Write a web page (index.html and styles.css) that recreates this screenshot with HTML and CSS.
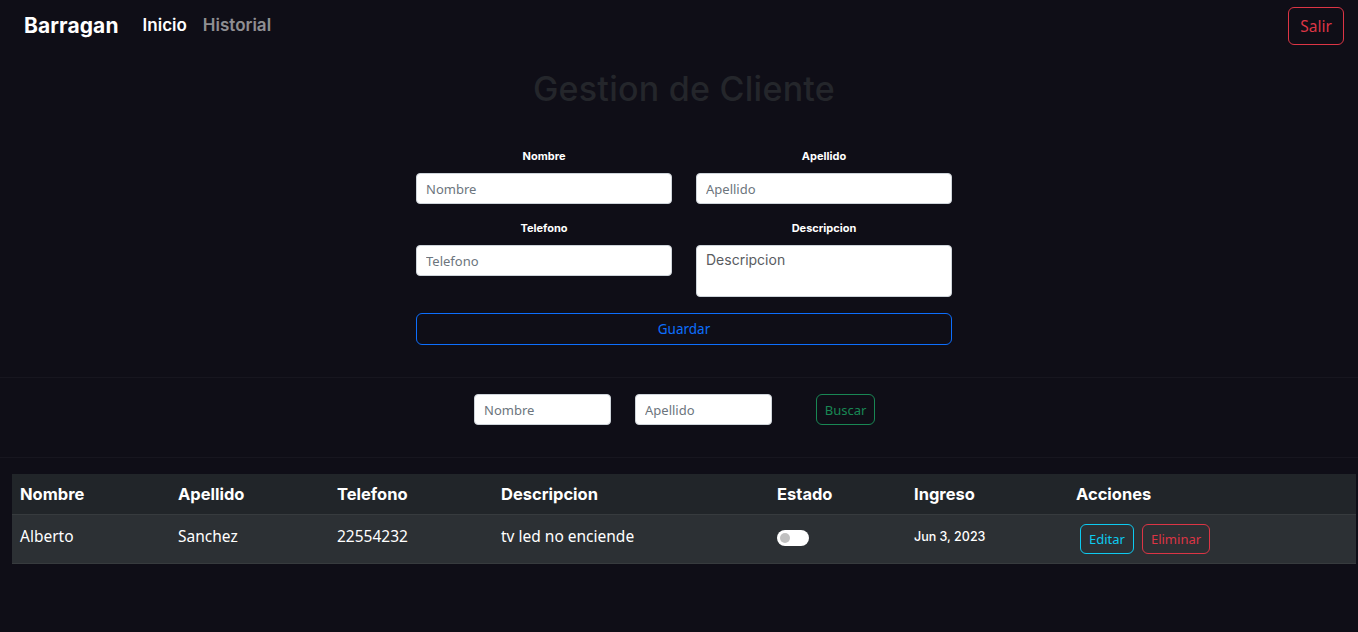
FILE: index.html
```html
<!DOCTYPE html>
<html lang="es">
<head>
<meta charset="utf-8">
<title>Barragan</title>
<link rel="stylesheet" href="styles.css">
</head>
<body>
<nav class="navbar">
  <div class="nav-left">
    <span class="brand">Barragan</span>
    <a class="nav-link active">Inicio</a>
    <a class="nav-link">Historial</a>
  </div>
  <button class="btn btn-red btn-salir">Salir</button>
</nav>

<main class="content">
  <h1 class="title">Gestion de Cliente</h1>

  <form class="client-form">
    <div class="field">
      <label>Nombre</label>
      <input class="input" placeholder="Nombre">
    </div>
    <div class="field">
      <label>Apellido</label>
      <input class="input" placeholder="Apellido">
    </div>
    <div class="field">
      <label>Telefono</label>
      <input class="input" placeholder="Telefono">
    </div>
    <div class="field">
      <label>Descripcion</label>
      <textarea class="input textarea" placeholder="Descripcion"></textarea>
    </div>
    <button type="button" class="btn btn-blue btn-guardar">Guardar</button>
  </form>
</main>

<div class="search-bar">
  <input class="input search-input" placeholder="Nombre">
  <input class="input search-input" placeholder="Apellido">
  <button class="btn btn-green btn-buscar">Buscar</button>
</div>

<table class="table">
  <thead>
    <tr>
      <th class="c1">Nombre</th>
      <th class="c2">Apellido</th>
      <th class="c3">Telefono</th>
      <th class="c4">Descripcion</th>
      <th class="c5">Estado</th>
      <th class="c6">Ingreso</th>
      <th class="c7">Acciones</th>
    </tr>
  </thead>
  <tbody>
    <tr>
      <td>Alberto</td>
      <td>Sanchez</td>
      <td>22554232</td>
      <td>tv led no enciende</td>
      <td><span class="toggle"><span class="knob"></span></span></td>
      <td class="date">Jun 3, 2023</td>
      <td><button class="btn btn-cyan btn-sm">Editar</button><button class="btn btn-red btn-sm">Eliminar</button></td>
    </tr>
  </tbody>
</table>
</body>
</html>
```
FILE: styles.css
```css
* { box-sizing: border-box; }
html, body { margin: 0; padding: 0; }
body {
  background: #0f0e17;
  color: #fff;
  font-family: "Noto Sans", "Open Sans", sans-serif;
  width: 1358px;
  height: 632px;
  overflow: hidden;
}
.navbar {
  display: flex;
  justify-content: space-between;
  align-items: flex-start;
  padding: 7px 14px 0 24px;
  height: 52px;
}
.nav-left { display: flex; align-items: center; height: 36px; }
.brand {
  font-family: Inter, "DejaVu Sans", sans-serif;
  font-weight: 700;
  font-size: 21px;
  letter-spacing: 0.1px;
  margin-right: 24px;
}
.nav-link {
  font-family: Inter, "DejaVu Sans", sans-serif;
  font-weight: 600;
  font-size: 17px;
  margin-right: 16px;
  color: rgba(255,255,255,0.55);
}
.nav-link.active { color: #fff; }
.btn {
  background: transparent;
  border: 1px solid;
  border-radius: 6px;
  font-family: "Noto Sans", "Open Sans", sans-serif;
  cursor: pointer;
}
.btn-red { color: #dc3545; border-color: #dc3545; }
.btn-blue { color: #0d6efd; border-color: #0d6efd; }
.btn-green { color: #198754; border-color: #198754; }
.btn-cyan { color: #0dcaf0; border-color: #0dcaf0; }
.btn-salir {
  height: 38px;
  width: 56px;
  font-size: 15.5px;
  padding: 0;
}
.content { padding-left: 10px; }
.title {
  margin: 17px 0 0;
  text-align: center;
  font-family: Inter, "DejaVu Sans", sans-serif;
  font-weight: 500;
  font-size: 34px;
  letter-spacing: 0.25px;
  color: #24262b;
  height: 40px;
  line-height: 40px;
}
.client-form {
  width: 536px;
  margin: 40px auto 0;
  display: grid;
  grid-template-columns: 256px 256px;
  column-gap: 24px;
  row-gap: 17px;
  align-items: start;
}
.field { display: flex; flex-direction: column; align-items: center; }
.field label {
  font-family: Inter, "DejaVu Sans", sans-serif;
  font-weight: 700;
  font-size: 11px;
  height: 14px;
  line-height: 14px;
  margin-bottom: 10px;
}
.input {
  width: 100%;
  height: 31px;
  border: 1px solid #ced4da;
  border-radius: 4px;
  background: #fff;
  padding: 0 9px;
  font-family: "Noto Sans", "Open Sans", sans-serif;
  font-size: 13px;
  color: #212529;
  outline: none;
}
.input::placeholder { color: #6c757d; }
.textarea {
  height: 52px;
  resize: none;
  padding: 5px 9px;
  font-family: Inter, "DejaVu Sans", sans-serif;
  font-size: 14px;
}
.textarea::placeholder { color: #595c5f; }
.btn-guardar {
  grid-column: 1 / 3;
  height: 32px;
  font-size: 13.5px;
  margin-top: -1px;
}
.search-bar {
  margin: 32px 0 0;
  border-top: 1px solid #17161f;
  border-bottom: 1px solid #17161f;
  height: 81px;
  display: flex;
  justify-content: center;
  align-items: flex-start;
  padding: 16px 9px 0 0;
}
.search-input { width: 137px; }
.search-input + .search-input { margin-left: 24px; }
.btn-buscar {
  margin-left: 44px;
  height: 31px;
  width: 59px;
  font-size: 13px;
  padding: 0;
}
.table {
  margin: 16px 0 0 12px;
  width: 1344px;
  border-collapse: collapse;
  table-layout: fixed;
}
.table th {
  background: #212529;
  height: 40px;
  text-align: left;
  padding: 0 8px;
  font-family: Inter, "DejaVu Sans", sans-serif;
  font-weight: 700;
  font-size: 16.5px;
  border-bottom: 1px solid #373b3e;
}
.table td {
  background: #2c3034;
  height: 49px;
  padding: 0 8px 5px;
  font-size: 15.5px;
  border-bottom: 1px solid #373b3e;
  vertical-align: middle;
}
.c1 { width: 158px; }
.c2 { width: 159px; }
.c3 { width: 164px; }
.c4 { width: 276px; }
.c5 { width: 137px; }
.c6 { width: 162px; }
.c7 { width: auto; }
.table td.date {
  font-family: Inter, "DejaVu Sans", sans-serif;
  font-weight: 500;
  font-size: 12.5px;
}
.toggle {
  display: inline-block;
  width: 32px;
  height: 16px;
  background: #fff;
  border-radius: 8px;
  position: relative;
  vertical-align: middle;
}
.knob {
  position: absolute;
  left: 3px;
  top: 3px;
  width: 10px;
  height: 10px;
  border-radius: 50%;
  background: #c0c0c0;
}
.btn-sm {
  height: 30px;
  font-size: 13px;
  padding: 0 8px;
  margin-left: 4px;
  margin-top: 5px;
}
.btn-sm + .btn-sm { margin-left: 8px; }
```
